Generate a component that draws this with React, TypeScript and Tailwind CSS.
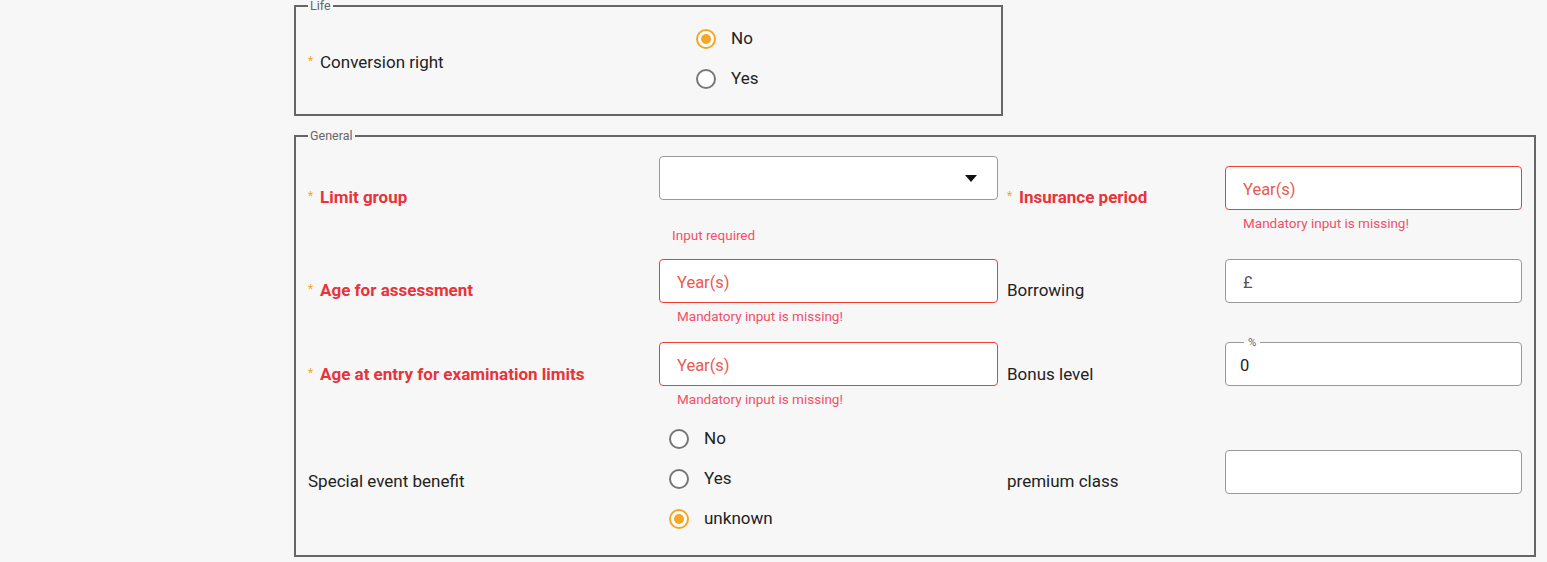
import React from "react";

const font = { fontFamily: "Roboto, 'Liberation Sans', sans-serif" };

const Radio = ({ checked, label }: { checked?: boolean; label: string }) => (
  <div className="flex items-center gap-[15px] h-[40px]">
    <span
      className={`w-[20px] h-[20px] rounded-full border-2 flex items-center justify-center bg-white ${
        checked ? "border-[#f5a623]" : "border-[#777]"
      }`}
    >
      {checked && <span className="w-[10px] h-[10px] rounded-full bg-[#f5a623]" />}
    </span>
    <span className="text-[17px] text-[#222]">{label}</span>
  </div>
);

const Label = ({ text, required, error }: { text: string; required?: boolean; error?: boolean }) => (
  <div className="flex items-center text-[17px] mt-[2px]">
    {required && <span className="text-[#f5a623] text-[12px] w-[12px] -mt-[4px]">*</span>}
    <span className={error ? "text-[#e8333a] font-bold" : "text-[#222]"}>{text}</span>
  </div>
);

const TextInput = ({ placeholder, error }: { placeholder?: string; error?: boolean }) => (
  <div
    className={`h-[44px] rounded-[4px] border bg-white flex items-center px-[17px] pt-[5px] text-[16.5px] ${
      error ? "border-[#ef3e36] text-[#ea5a50]" : "border-[#9a9a9a] text-[#555]"
    }`}
  >
    {placeholder}
  </div>
);

const ErrorText = ({ text, className = "" }: { text: string; className?: string }) => (
  <div className={`text-[13.5px] leading-[14px] text-[#f0506a] ${className}`}>{text}</div>
);

export default function App() {
  return (
    <div className="min-h-screen bg-[#f7f7f7] pl-[294px]" style={font}>
      {/* life */}
      <fieldset className="w-[709px] border-2 border-[#666] m-0 pl-[12px] pr-[12px] pb-[15px] pt-[7px]">
        <legend className="text-[12.5px] leading-[12px] text-[#666] px-[2px]">Life</legend>
        <div className="flex items-center">
          <div className="w-[388px] pt-[6px]">
            <Label text="Conversion right" required />
          </div>
          <div className="flex flex-col">
            <Radio checked label="No" />
            <Radio label="Yes" />
          </div>
        </div>
      </fieldset>

      {/* general */}
      <fieldset className="w-[1242px] border-2 border-[#666] mt-[14px] pl-[12px] pr-[11px] pb-[7px] pt-[6px]">
        <legend className="text-[12.5px] leading-[12px] text-[#666] px-[2px]">General</legend>

        {/* row 1 */}
        <div className="flex h-[98px]">
          <div className="w-[351px] flex items-center"><Label text="Limit group" required error /></div>
          <div className="w-[339px] pt-[8px]">
            <div className="h-[44px] rounded-[4px] border border-[#9a9a9a] bg-white flex items-center justify-end pr-[20px]">
              <svg width="12" height="7" viewBox="0 0 12 7"><path d="M0 0h12L6 7z" fill="#111" /></svg>
            </div>
            <ErrorText text="Input required" className="mt-[28px] ml-[13px]" />
          </div>
          <div className="w-[218px] ml-[9px] flex items-center"><Label text="Insurance period" required error /></div>
          <div className="w-[297px] pt-[18px]">
            <TextInput placeholder="Year(s)" error />
            <ErrorText text="Mandatory input is missing!" className="mt-[6px] ml-[18px]" />
          </div>
        </div>

        {/* row 2 */}
        <div className="flex h-[88px]">
          <div className="w-[351px] flex items-center"><Label text="Age for assessment" required error /></div>
          <div className="w-[339px] pt-[13px]">
            <TextInput placeholder="Year(s)" error />
            <ErrorText text="Mandatory input is missing!" className="mt-[6px] ml-[18px]" />
          </div>
          <div className="w-[218px] ml-[9px] flex items-center"><Label text="Borrowing" /></div>
          <div className="w-[297px] pt-[13px]">
            <TextInput placeholder="£" />
          </div>
        </div>

        {/* row 3 */}
        <div className="flex h-[80px]">
          <div className="w-[351px] flex items-center"><Label text="Age at entry for examination limits" required error /></div>
          <div className="w-[339px] pt-[8px]">
            <TextInput placeholder="Year(s)" error />
            <ErrorText text="Mandatory input is missing!" className="mt-[6px] ml-[18px]" />
          </div>
          <div className="w-[218px] ml-[9px] flex items-center"><Label text="Bonus level" /></div>
          <div className="w-[297px] pt-[4px]">
            <fieldset className="h-[48px] rounded-[4px] border border-[#9a9a9a] bg-white m-0 px-[14px] pt-0 pb-0">
              <legend className="text-[11.5px] leading-[8px] text-[#666] px-[4px] ml-[4px]">%</legend>
              <div className="h-[37px] flex items-center pt-[4px] text-[16.5px] text-[#222]">0</div>
            </fieldset>
          </div>
        </div>

        {/* row 4 */}
        <div className="flex h-[134px]">
          <div className="w-[351px] flex items-center"><Label text="Special event benefit" /></div>
          <div className="w-[339px] pt-[5px] pl-[10px]">
            <Radio label="No" />
            <Radio label="Yes" />
            <Radio checked label="unknown" />
          </div>
          <div className="w-[218px] ml-[9px] flex items-center"><Label text="premium class" /></div>
          <div className="w-[297px] pt-[36px]">
            <TextInput />
          </div>
        </div>
      </fieldset>
    </div>
  );
}
